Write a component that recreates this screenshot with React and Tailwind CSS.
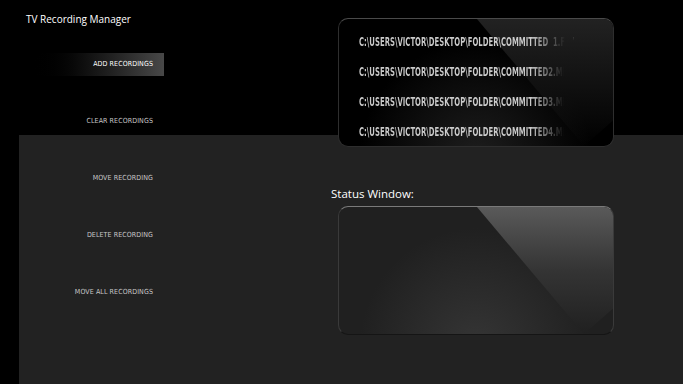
import React from "react";

const files = [
  "C:\\USERS\\VICTOR\\DESKTOP\\FOLDER\\COMMITTED  1.FLV",
  "C:\\USERS\\VICTOR\\DESKTOP\\FOLDER\\COMMITTED2.MP4",
  "C:\\USERS\\VICTOR\\DESKTOP\\FOLDER\\COMMITTED3.MP4",
  "C:\\USERS\\VICTOR\\DESKTOP\\FOLDER\\COMMITTED4.MP4",
];

const actions = [
  "ADD RECORDINGS",
  "CLEAR RECORDINGS",
  "MOVE RECORDING",
  "DELETE RECORDING",
  "MOVE ALL RECORDINGS",
];

const Glass = ({ dark, children }) => (
  <div
    className={`relative w-[276px] h-[129px] rounded-[10px] overflow-hidden border ${
      dark
        ? "bg-black border-[#2e2e2e] border-t-[#4a4a4a]"
        : "bg-[#202020] border-[#1a1a1a] border-t-[#7a7a7a] border-x-[#3a3a3a] border-b-[#151515]"
    }`}
  >
    {/* bottom glow */}
    <div
      className={`absolute inset-0 ${
        dark
          ? "bg-[radial-gradient(ellipse_at_50%_110%,#1e1e1e_0%,transparent_60%)]"
          : "bg-[radial-gradient(ellipse_at_50%_110%,#353535_0%,transparent_60%)]"
      }`}
    />
    {/* diagonal sheen */}
    <div
      className={`absolute inset-0 [clip-path:polygon(138px_0,100%_0,100%_80%,245px_100%)] ${
        dark
          ? "bg-gradient-to-b from-[#222222] via-[#111111] to-transparent"
          : "bg-gradient-to-b from-[#5a5a5a] via-[#343434] to-[#202020]"
      }`}
    />
    <div className="relative">{children}</div>
  </div>
);

export default function App() {
  return (
    <div className="relative w-[683px] h-[384px] bg-black overflow-hidden font-['Open_Sans',sans-serif]">
      <div className="absolute left-[19px] top-[135px] right-0 bottom-0 bg-[#222222]" />

      <div className="relative flex">
        {/* left column */}
        <div className="w-[164px] shrink-0">
          <h1 className="pl-[26px] pt-[12px] text-[10px] leading-[15px] text-white">
            TV Recording Manager
          </h1>
          <div className="mt-[26px] flex flex-col gap-[34px]">
            {actions.map((a, i) => (
              <div
                key={a}
                className={`ml-[27px] h-[23px] flex items-center justify-end pr-[11px] ${
                  i === 0 ? "bg-gradient-to-r from-black to-[#484848]" : ""
                }`}
              >
                <span
                  className={`font-['DejaVu_Sans_Condensed',sans-serif] text-[7px] tracking-[0.1px] ${
                    i === 0 ? "text-white" : "text-[#c8c8c8]"
                  }`}
                >
                  {a}
                </span>
              </div>
            ))}
          </div>
        </div>

        {/* right column */}
        <div className="ml-[167px] pt-[18px]">
          <div className="ml-[7px]">
            <Glass dark>
              <div className="flex flex-col gap-[16px] pl-[20px] pt-[16px]">
                {files.map((f) => (
                  <div key={f} className="h-[14px] w-[240px] overflow-hidden">
                    <span className="block w-max origin-left scale-x-[0.59] whitespace-pre font-['DejaVu_Sans_Condensed',sans-serif] font-bold text-[13px] leading-[14px] bg-gradient-to-r from-[#cccccc] via-[#cccccc] via-[80%] to-transparent to-[96%] bg-clip-text text-transparent">
                      {f}
                    </span>
                  </div>
                ))}
              </div>
            </Glass>
          </div>

          <div className="mt-[40px] text-[11.5px] leading-[14px] text-white">Status Window:</div>
          <div className="mt-[5px] ml-[7px]">
            <Glass />
          </div>
        </div>
      </div>
    </div>
  );
}
